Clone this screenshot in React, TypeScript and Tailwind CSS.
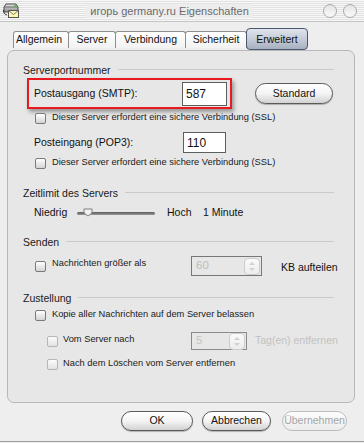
import React from "react";

function Check({ disabled }: { disabled?: boolean }) {
  return disabled ? (
    <div className="w-[11px] h-[11px] shrink-0 rounded-[2px] border border-[#b6b6b6] bg-[linear-gradient(180deg,#fbfbfb,#e2e2e2)]" />
  ) : (
    <div className="w-[11px] h-[11px] shrink-0 rounded-[2px] border border-[#7a7a7a] bg-[linear-gradient(180deg,#ffffff,#d4d4d4)]" />
  );
}

function Section({ title }: { title: string }) {
  return (
    <div className="flex items-center h-[14px]">
      <span className="text-[10.5px] leading-[14px] text-[#1a1a1a] whitespace-nowrap">{title}</span>
      <div className="flex-1 h-px bg-[#cacaca] ml-[7px] mt-[-2px]" />
    </div>
  );
}

function SpinArrows() {
  return (
    <div className="w-[16px] h-[17px] shrink-0 rounded-[4px] border border-[#cdcdcd] bg-[linear-gradient(180deg,#fafafa,#ececec)] flex flex-col items-center justify-center gap-[3px]">
      <svg width="6" height="3" viewBox="0 0 6 3"><path d="M0 3 L3 0 L6 3 Z" fill="#d2d2d2" /></svg>
      <svg width="6" height="3" viewBox="0 0 6 3"><path d="M0 0 L3 3 L6 0 Z" fill="#d2d2d2" /></svg>
    </div>
  );
}

function Icon() {
  return (
    <svg width="18" height="17" viewBox="0 0 18 17">
      <defs>
        <linearGradient id="disk" x1="0" y1="0" x2="0" y2="1">
          <stop offset="0" stopColor="#e6e6e6" />
          <stop offset="1" stopColor="#8d8d8d" />
        </linearGradient>
      </defs>
      <path d="M2 5 L4 2 L14 2 L16 5 L16 10 L2 10 Z" fill="url(#disk)" stroke="#4a4a4a" strokeWidth="1" />
      <path d="M2 5 L16 5" stroke="#6a6a6a" strokeWidth="1" />
      <circle cx="13.5" cy="3.6" r="1.2" fill="#2fd12f" />
      <rect x="6.5" y="8.5" width="10" height="7" fill="#fff8b0" stroke="#555" strokeWidth="1" />
      <path d="M6.5 8.5 L11.5 12.5 L16.5 8.5" fill="none" stroke="#777" strokeWidth="1" />
      <path d="M1.5 8 Q1 12 5 13" fill="none" stroke="#333" strokeWidth="1" />
    </svg>
  );
}

function Pill({ label, className, disabled }: { label: string; className: string; disabled?: boolean }) {
  return disabled ? (
    <div className={`${className} shrink-0 whitespace-nowrap rounded-full border border-[#bdbdbd] bg-[linear-gradient(180deg,#fdfdfd,#ececec)] flex items-center justify-center text-[10.5px] text-[#a6a6a6]`}>
      {label}
    </div>
  ) : (
    <div className={`${className} shrink-0 whitespace-nowrap rounded-full border border-[#5a5a5a] bg-[linear-gradient(180deg,#ffffff_0%,#f4f4f4_50%,#d2d2d2_100%)] shadow-[0_1px_1px_rgba(0,0,0,0.25)] flex items-center justify-center text-[10.5px] text-[#111]`}>
      {label}
    </div>
  );
}

export default function App() {
  return (
    <div className="w-[364px] h-[443px] bg-[#eeeeee] flex flex-col overflow-hidden font-['Liberation_Sans',Arial,sans-serif] text-[#111]">
      {/* Title bar */}
      <div className="h-[22px] shrink-0 flex items-center border-b border-[#c4c4c4] bg-[repeating-linear-gradient(180deg,#f7f7f7_0px,#f7f7f7_1px,#e2e2e2_1px,#e2e2e2_2px)]">
        <div className="ml-[2px] w-[18px] h-[17px] flex">
          <Icon />
        </div>
        <div className="flex-1 flex justify-center pr-[4px]">
          <span className="px-[4px] bg-[#ededed] text-[11px] leading-[14px] text-[#6b6b6b] font-['Liberation_Sans','Noto_Sans',sans-serif]">
            игорь germany.ru Eigenschaften
          </span>
        </div>
        <div className="flex gap-[6px] mr-[7px]">
          <div className="w-[14px] h-[14px] rounded-full border border-[#a9a9a9] bg-[linear-gradient(180deg,#e4e4e4,#fafafa)]" />
          <div className="w-[14px] h-[14px] rounded-full border border-[#a9a9a9] bg-[linear-gradient(180deg,#e4e4e4,#fafafa)]" />
        </div>
      </div>

      {/* Tabs */}
      <div className="mt-[6px] h-[22px] shrink-0 flex items-start pl-[13px] text-[10.5px]">
        <div className="mt-[3px] h-[17px] w-[56px] flex items-center pl-[2px] border-l border-t border-r border-[#8e8e8e] rounded-t-[3px] bg-[linear-gradient(180deg,#ffffff,#f2f2f2)]">Allgemein</div>
        <div className="-ml-px mt-[3px] h-[17px] w-[48px] flex items-center justify-center border-l border-t border-r border-[#8e8e8e] rounded-t-[3px] bg-[linear-gradient(180deg,#ffffff,#f2f2f2)]">Server</div>
        <div className="-ml-px mt-[3px] h-[17px] w-[71px] flex items-center justify-center border-l border-t border-r border-[#8e8e8e] rounded-t-[3px] bg-[linear-gradient(180deg,#ffffff,#f2f2f2)]">Verbindung</div>
        <div className="-ml-px mt-[3px] h-[17px] w-[62px] flex items-center justify-center border-l border-t border-r border-[#8e8e8e] rounded-t-[3px] bg-[linear-gradient(180deg,#ffffff,#f2f2f2)]">Sicherheit</div>
        <div className="-ml-px h-[22px] w-[62px] flex justify-center pt-[3px] border border-[#4c5870] rounded-[4px] bg-[linear-gradient(180deg,#dfe4ec_0%,#c3cad6_55%,#a7b0bf_100%)] text-[#111]">Erweitert</div>
      </div>

      {/* Panel */}
      <div className="ml-[7px] mr-[9px] h-[353px] shrink-0 rounded-[7px] border border-[#b8b8b8] bg-[#e7e7e7] pl-[15px] pr-[20px] pt-[12px] flex flex-col">
        <Section title="Serverportnummer" />

        <div className="mt-[1px] flex items-center">
          <div className="ml-[4px] w-[205px] h-[31px] shrink-0 border-2 border-[#e8191f] shadow-[2px_3px_4px_rgba(0,0,0,0.35)] flex items-center justify-between pl-[5px] pr-[3px]">
            <span className="text-[10.5px] text-[#111] whitespace-nowrap">Postausgang (SMTP):</span>
            <div className="w-[45px] h-[24px] border border-[#5e5e5e] bg-white flex items-center pl-[3px] text-[12px]">587</div>
          </div>
          <Pill label="Standard" className="ml-[23px] w-[78px] h-[21px]" />
        </div>

        <div className="mt-[2px] h-[14px] ml-[12px] flex items-center gap-[6px]">
          <Check />
          <span className="text-[9.3px] text-[#1a1a1a] whitespace-nowrap">Dieser Server erfordert eine sichere Verbindung (SSL)</span>
        </div>

        <div className="mt-[7px] h-[21px] ml-[11px] flex items-center">
          <span className="w-[149px] shrink-0 text-[10.5px] whitespace-nowrap">Posteingang (POP3):</span>
          <div className="w-[43px] h-[21px] shrink-0 border border-[#5e5e5e] bg-white flex items-center pl-[3px] text-[12px]">110</div>
        </div>

        <div className="mt-[3px] h-[14px] ml-[12px] flex items-center gap-[6px]">
          <Check />
          <span className="text-[9.3px] text-[#1a1a1a] whitespace-nowrap">Dieser Server erfordert eine sichere Verbindung (SSL)</span>
        </div>

        <div className="mt-[16px]">
          <Section title="Zeitlimit des Servers" />
        </div>

        <div className="mt-[6px] h-[14px] ml-[11px] flex items-center text-[10.5px] whitespace-nowrap">
          <span className="w-[43px] shrink-0">Niedrig</span>
          <div className="relative w-[78px] h-[14px] shrink-0 flex items-center">
            <div className="w-full h-[3px] rounded-full bg-[linear-gradient(180deg,#5a5a5a,#9a9a9a)]" />
            <svg className="absolute left-[6px] top-[2px]" width="10" height="9" viewBox="0 0 10 9">
              <path d="M1 1 L9 1 L9 5 L5 8 L1 5 Z" fill="#f2f2f2" stroke="#7c7c7c" strokeWidth="1" />
            </svg>
          </div>
          <span className="ml-[12px] w-[36px] shrink-0">Hoch</span>
          <span>1 Minute</span>
        </div>

        <div className="mt-[15px]">
          <Section title="Senden" />
        </div>

        <div className="mt-[7px] h-[20px] ml-[12px] flex items-start whitespace-nowrap">
          <div className="mt-[5px]">
            <Check />
          </div>
          <span className="ml-[6px] w-[139px] shrink-0 text-[9.3px] leading-[12px] mt-[1px] text-[#1a1a1a]">Nachrichten größer als</span>
          <div className="w-[71px] h-[20px] shrink-0 border border-[#777] flex items-center justify-between pl-[4px] pr-[1px]">
            <span className="text-[11.5px] text-[#bcbcbc]">60</span>
            <SpinArrows />
          </div>
          <span className="ml-[19px] mt-[5px] shrink-0 text-[10.5px] leading-[12px]">KB aufteilen</span>
        </div>

        <div className="mt-[15px]">
          <Section title="Zustellung" />
        </div>

        <div className="mt-[3px] h-[14px] ml-[12px] flex items-center gap-[6px]">
          <Check />
          <span className="text-[9.3px] text-[#1a1a1a] whitespace-nowrap">Kopie aller Nachrichten auf dem Server belassen</span>
        </div>

        <div className="mt-[10px] h-[18px] ml-[24px] flex items-center whitespace-nowrap">
          <Check disabled />
          <span className="ml-[5px] w-[128px] shrink-0 text-[9.3px] text-[#1a1a1a] -mt-[3px]">Vom Server nach</span>
          <div className="w-[56px] h-[18px] shrink-0 border border-[#8a8a8a] flex items-center justify-between pl-[4px] pr-[1px]">
            <span className="text-[11.5px] text-[#c4c4c4]">5</span>
            <SpinArrows />
          </div>
          <span className="ml-[8px] shrink-0 text-[10.5px] text-[#c2c2c2]">Tag(en) entfernen</span>
        </div>

        <div className="mt-[7px] h-[14px] ml-[24px] flex items-center gap-[5px]">
          <Check disabled />
          <span className="text-[9.3px] text-[#1a1a1a] whitespace-nowrap">Nach dem Löschen vom Server entfernen</span>
        </div>
      </div>

      {/* Buttons */}
      <div className="mt-[8px] h-[20px] shrink-0 flex justify-end pr-[17px] gap-[9px]">
        <Pill label="OK" className="w-[72px] h-[20px]" />
        <Pill label="Abbrechen" className="w-[69px] h-[20px]" />
        <Pill label="Übernehmen" className="ml-[2px] w-[65px] h-[20px]" disabled />
      </div>

      <div className="mt-auto mb-[1px] h-px shrink-0 bg-[#9c9c9c]" />
    </div>
  );
}
